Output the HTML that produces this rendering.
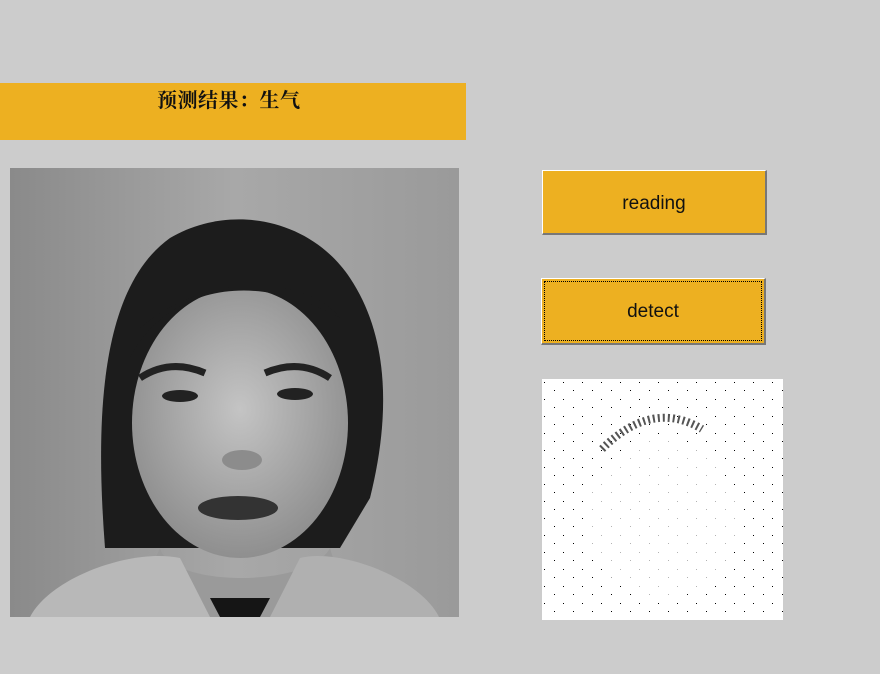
<!DOCTYPE html>
<html><head><meta charset="utf-8"><style>
body{margin:0;width:880px;height:674px;background:#cccccc;position:relative;overflow:hidden;font-family:"Liberation Sans",sans-serif}
.bar{position:absolute;left:0;top:83px;width:466px;height:57px;background:#edb021}
.bar span{position:absolute;left:157px;top:1px;font:bold 20px "Liberation Serif","Noto Serif CJK SC",serif;color:#111;letter-spacing:0.5px}
.btn{position:absolute;background:#edb021;box-sizing:border-box;border-top:1px solid #fff;border-left:1px solid #fff;border-right:2px solid #777;border-bottom:2px solid #777;font-size:19px;color:#111;text-align:center}
.photo{position:absolute;left:10px;top:168px;width:449px;height:449px}
.edge{position:absolute;left:542px;top:379px;width:241px;height:241px;background:#fff}
</style></head><body>
<div class="bar"><span>预测结果：生气</span></div>
<div class="btn" style="left:542px;top:170px;width:225px;height:65px;line-height:65px">reading</div>
<div class="btn" style="left:541px;top:278px;width:225px;height:67px;line-height:66px"><div style="position:absolute;left:2px;top:2px;right:2px;bottom:2px;border:1px dotted #000"></div>detect</div>
<svg class="photo" viewBox="0 0 449 449">
<defs>
<linearGradient id="bg" x1="0" y1="0" x2="1" y2="0"><stop offset="0" stop-color="#8a8a8a"/><stop offset="0.5" stop-color="#a8a8a8"/><stop offset="1" stop-color="#9a9a9a"/></linearGradient>
<radialGradient id="fc" cx="0.5" cy="0.45" r="0.6"><stop offset="0" stop-color="#c4c4c4"/><stop offset="1" stop-color="#8a8a8a"/></radialGradient>
</defs>
<rect width="449" height="449" fill="url(#bg)"/>
<path d="M95 380 C85 250 90 120 160 70 C220 35 300 50 340 110 C380 170 380 250 360 330 L330 380 Z" fill="#1c1c1c"/>
<ellipse cx="230" cy="255" rx="108" ry="135" fill="url(#fc)"/>
<path d="M120 190 C150 130 230 95 330 150 C300 110 200 100 130 160 Z" fill="#1c1c1c"/>
<path d="M130 210 Q160 190 195 205" stroke="#222" stroke-width="7" fill="none"/>
<path d="M255 205 Q290 190 320 210" stroke="#222" stroke-width="7" fill="none"/>
<ellipse cx="170" cy="228" rx="18" ry="6" fill="#222"/>
<ellipse cx="285" cy="226" rx="18" ry="6" fill="#222"/>
<ellipse cx="232" cy="292" rx="20" ry="10" fill="#8c8c8c"/>
<ellipse cx="228" cy="340" rx="40" ry="12" fill="#333"/>
<path d="M150 380 C160 420 300 420 320 380 L340 449 L120 449 Z" fill="#9a9a9a"/>
<path d="M20 449 C40 410 120 380 170 390 L200 449 Z" fill="#b8b8b8"/>
<path d="M429 449 C410 410 330 380 290 390 L260 449 Z" fill="#b0b0b0"/>
<path d="M200 430 L260 430 L250 449 L210 449 Z" fill="#151515"/>
</svg>
<svg class="edge" viewBox="0 0 241 241">
<defs><pattern id="d" width="19" height="17" patternUnits="userSpaceOnUse"><rect x="2" y="3" width="1" height="1" fill="#000"/><rect x="12" y="11" width="1" height="1" fill="#000"/></pattern></defs>
<rect width="241" height="241" fill="url(#d)"/>
<path d="M60 70 Q110 20 160 50" stroke="#555" stroke-width="8" stroke-dasharray="2 3" fill="none"/>
<ellipse cx="120" cy="140" rx="75" ry="80" fill="#fff" opacity="0.7"/>
</svg>
</body></html>
